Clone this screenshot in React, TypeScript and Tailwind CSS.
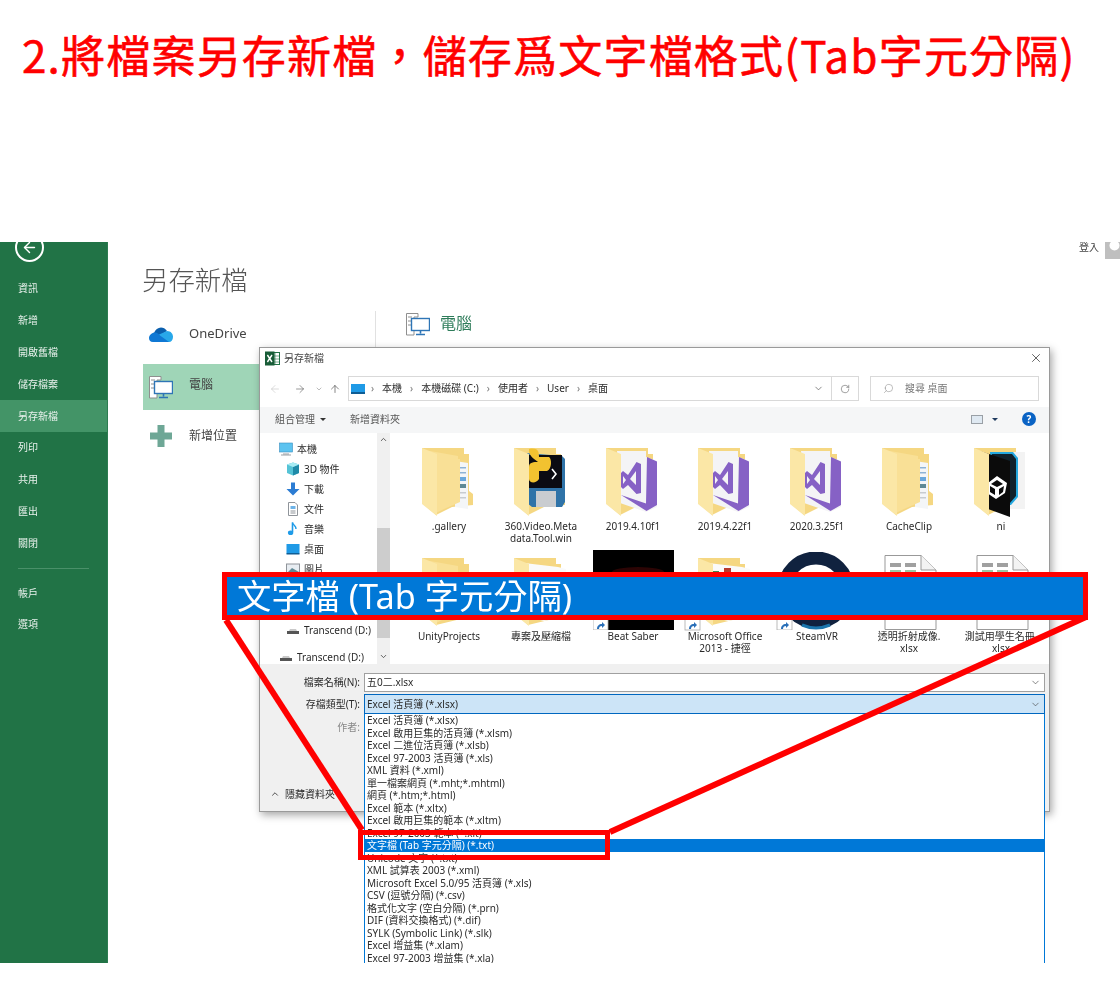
import type { ReactNode } from "react";
import { ArrowLeft, ArrowRight, ArrowUp, ChevronDown, ChevronUp, RotateCw, Search, X } from "lucide-react";

const sidebarTop = ["資訊", "新增", "開啟舊檔", "儲存檔案", "另存新檔", "列印", "共用", "匯出", "關閉"];
const sidebarBottom = ["帳戶", "選項"];

const fileTypes = [
  "Excel 活頁簿 (*.xlsx)",
  "Excel 啟用巨集的活頁簿 (*.xlsm)",
  "Excel 二進位活頁簿 (*.xlsb)",
  "Excel 97-2003 活頁簿 (*.xls)",
  "XML 資料 (*.xml)",
  "單一檔案網頁 (*.mht;*.mhtml)",
  "網頁 (*.htm;*.html)",
  "Excel 範本 (*.xltx)",
  "Excel 啟用巨集的範本 (*.xltm)",
  "Excel 97-2003 範本 (*.xlt)",
  "文字檔 (Tab 字元分隔) (*.txt)",
  "Unicode 文字 (*.txt)",
  "XML 試算表 2003 (*.xml)",
  "Microsoft Excel 5.0/95 活頁簿 (*.xls)",
  "CSV (逗號分隔) (*.csv)",
  "格式化文字 (空白分隔) (*.prn)",
  "DIF (資料交換格式) (*.dif)",
  "SYLK (Symbolic Link) (*.slk)",
  "Excel 增益集 (*.xlam)",
  "Excel 97-2003 增益集 (*.xla)",
];

function Shortcut({ x = 0, y = 0 }: { x?: number; y?: number }) {
  return (
    <g transform={`translate(${x} ${y})`}>
      <rect x="0" y="0" width="15" height="14" fill="#fff" stroke="#aaa" strokeWidth="0.8" />
      <path d="M4 13 C4 10 6 8 9 8 L9 6 L12 9 L9 12 L9 10 C7 10 6 11 6 13 Z" fill="#2a6fb8" />
    </g>
  );
}

function Folder({ contents }: { contents?: ReactNode }) {
  return (
    <svg viewBox="-1 0 56 73" className="w-[56px] h-[73px]">
      <path d="M0 1 H42 V7 H47 V44 L51 47 V58 L30 60 L14 68 L0 56 Z" fill="#f5d782" />
      {contents}
      <path d="M0 1 L15 7 V69 L0 57 Z" fill="#fbe7a6" />
    </svg>
  );
}

function GalleryFolder() {
  return (
    <Folder
      contents={
        <>
          <path d="M33 14 L46 16 V62 L33 60 Z" fill="#f4f6f8" />
          <rect x="35" y="20" width="9" height="1.5" fill="#8fb4d6" />
          <rect x="35" y="25" width="9" height="1.5" fill="#8fb4d6" />
          <rect x="35" y="30" width="9" height="4" fill="#6aa8dc" />
          <rect x="35" y="37" width="9" height="4" fill="#5f8a96" />
          <rect x="35" y="45" width="9" height="1.5" fill="#c8ccd0" />
          <rect x="35" y="50" width="9" height="1.5" fill="#c8ccd0" />
          <path d="M8 4 L36 9 V12 H38 V55 L22 62 L14 66 Z" fill="#f9e096" />
        </>
      }
    />
  );
}

function PythonFolder() {
  return (
    <Folder
      contents={
        <>
          <path d="M13 6 L48 9 L51 12 V55 L48 60 H18 L13 56 Z" fill="#2f73a8" />
          <rect x="15" y="8" width="33" height="33" fill="#0b0b12" />
          <path d="M38 22 L42 27 L38 32" fill="none" stroke="#fff" strokeWidth="1.6" />
          <rect x="22" y="44" width="20" height="16" fill="#c9ccd0" />
          <path d="M15 2 C25 0 25 6 25 10 H35 C38 12 38 22 33 24 H25 V32 C22 37 15 36 15 32 V20 C15 15 20 15 24 15 C20 12 14 8 15 2 Z" fill="#f2c230" />
        </>
      }
    />
  );
}

function VsFolder() {
  return (
    <Folder
      contents={
        <>
          <path d="M11 4 L40 4 V10 L51 14 V60 L40 65 L14 56 Z" fill="#f4f4f6" />
          <path d="M41 10 L51 14.5 V58 L40.5 64 L15 48 L40 56.5 Z" fill="#8661c5" />
          <path fillRule="evenodd" d="M30.5 15 L35 17 V46 L30.5 47 L22 38 L17 42 L15 40 V26 L17 24 L22 28 Z M30 24 L24 32 L30 38 Z M17 29 V37 L20 33 Z" fill="#8661c5" />
        </>
      }
    />
  );
}

function UnityFolder() {
  return (
    <Folder
      contents={
        <>
          <path d="M30 5 H51 V62 H34 Z" fill="#f3f3f3" />
          <path d="M16 5 H39 L44 11 V50 L37 58 H20 Z" fill="#24a9e0" />
          <path d="M18 7 H38 L42 12 V49 L36 56 H20 Z" fill="#10222c" />
          <path d="M6 4 L36 14 V70 L14 62 Z" fill="#0b0b0b" />
          <path fillRule="evenodd" d="M23 29 L33 36 L31 46 L22 52 L13 46 L14 36 Z M23 33 L17 37 L23 40 L29 37 Z M16 39 L16 45 L21 48 L21 42 Z M30 39 L25 42 L25 48 L29 45 Z" fill="#fff" />
        </>
      }
    />
  );
}

function PlainFolder({ kind }: { kind: "plain" | "paper" | "office" }) {
  return (
    <svg viewBox="-1 0 56 73" className="w-[56px] h-[73px] overflow-visible">
      <path d="M0 1 H42 V7 H47 V60 L14 68 L0 56 Z" fill="#f5d782" />
      {kind === "plain" && <path d="M8 4 L36 9 V55 L14 66 Z" fill="#f9e096" />}
      {kind !== "plain" && <path d="M10 6 L44 10 L52 12 V60 L30 64 L14 60 Z" fill="#fafafa" />}
      {kind === "office" && (
        <>
          <rect x="14" y="14" width="7" height="5" fill="#3f8a4f" />
          <rect x="26" y="11" width="7" height="5" fill="#b8392c" />
        </>
      )}
      <path d="M0 1 L15 7 V69 L0 57 Z" fill="#fbe7a6" />
      {kind === "office" && <Shortcut x={-13} y={59} />}
    </svg>
  );
}

function BeatSaber() {
  return (
    <svg viewBox="0 0 81 80" className="w-[81px] h-[80px]">
      <rect width="81" height="80" fill="#000" />
      <ellipse cx="45" cy="22" rx="26" ry="5" fill="#2c0404" />
      <Shortcut x={0} y={66} />
    </svg>
  );
}

function SteamVr() {
  return (
    <svg viewBox="0 0 92 78" className="w-[92px] h-[78px]">
      <circle cx="45" cy="38" r="32" fill="none" stroke="#10223f" strokeWidth="13" />
      <path d="M31 73 Q45 79 59 73" fill="none" stroke="#1b75ac" strokeWidth="3" />
      <Shortcut x={6} y={64} />
    </svg>
  );
}

function SheetDoc() {
  const rows = [8, 15, 22, 29];
  return (
    <svg viewBox="0 0 60 75" className="w-[60px] h-[75px]">
      <path d="M6 0.5 H42 L57 15 V74.5 H6 Z" fill="#fff" stroke="#999" />
      <path d="M42 0.5 V15 H57" fill="#f3f3f3" stroke="#999" />
      {rows.map((y, i) => (
        <g key={y} fill={i % 2 ? "#9bc7a4" : "#a0a0a0"}>
          <rect x="11" y={y} width="11" height="4" />
          <rect x="26" y={y} width="11" height="4" />
          {y > 15 && <rect x="41" y={y} width="11" height="4" />}
        </g>
      ))}
    </svg>
  );
}

function PcIcon({ className }: { className: string }) {
  return (
    <svg viewBox="0 0 24 23" className={className}>
      <path d="M0.5 0.5 H12 V4 H8 V22 H0.5 Z" fill="#fff" stroke="#8f8f8f" />
      <path d="M2 4 H6 M2 8 H5 M2 12 H5" stroke="#8f8f8f" />
      <rect x="5.5" y="5.5" width="18" height="12" fill="#fff" stroke="#2e75b6" strokeWidth="1.4" />
      <path d="M14.5 17.5 V20.5 M10 21.5 H19" stroke="#2e75b6" strokeWidth="1.6" />
    </svg>
  );
}

function TreeIcon({ name }: { name: string }) {
  if (name === "pc")
    return (
      <svg viewBox="0 0 14 14" className="w-[14px] h-[14px] shrink-0">
        <rect x="0.5" y="1" width="13" height="9" fill="#5cc3f0" stroke="#3a8ec0" strokeWidth="0.6" />
        <path d="M4 12 H10 M2 13 H12" stroke="#9a9fa5" />
      </svg>
    );
  if (name === "cube")
    return (
      <svg viewBox="0 0 14 14" className="w-[14px] h-[14px] shrink-0">
        <path d="M7 0.5 L13 2.5 V11 L7 13.5 L1 11 V2.5 Z" fill="#55c3d6" />
        <path d="M7 5 L13 2.5 V11 L7 13.5 Z" fill="#1f8aa8" />
        <path d="M1 2.5 L7 0.5 L13 2.5 L7 5 Z" fill="#a8ecf4" />
      </svg>
    );
  if (name === "down")
    return (
      <svg viewBox="0 0 14 14" className="w-[14px] h-[14px] shrink-0">
        <path d="M5 0.5 H9 V7 H13.5 L7 13.5 L0.5 7 H5 Z" fill="#2b7cd3" />
      </svg>
    );
  if (name === "doc")
    return (
      <svg viewBox="0 0 14 14" className="w-[14px] h-[14px] shrink-0">
        <path d="M2.5 0.5 H9 L11.5 3 V13.5 H2.5 Z" fill="#fff" stroke="#8f949a" />
        <rect x="4.5" y="4" width="5" height="3" fill="#6db3e8" />
        <path d="M4.5 9 H9.5 M4.5 11 H9.5" stroke="#8f949a" />
      </svg>
    );
  if (name === "music")
    return (
      <svg viewBox="0 0 14 14" className="w-[14px] h-[14px] shrink-0">
        <path d="M6.5 0.5 V10" stroke="#1e9be8" strokeWidth="1.6" />
        <ellipse cx="4.6" cy="10.8" rx="2.7" ry="2.3" fill="#1e9be8" />
        <path d="M6.5 0.5 C7 3.5 10 3.5 10 7" fill="none" stroke="#1e9be8" strokeWidth="1.4" />
      </svg>
    );
  if (name === "desktop")
    return (
      <svg viewBox="0 0 14 14" className="w-[14px] h-[14px] shrink-0">
        <rect x="0.5" y="2" width="13" height="9.5" fill="#1f9ae6" />
        <rect x="0.5" y="11" width="13" height="1.5" fill="#0f5d94" />
      </svg>
    );
  if (name === "picture")
    return (
      <svg viewBox="0 0 14 14" className="w-[14px] h-[14px] shrink-0">
        <rect x="0.5" y="2" width="13" height="10" fill="#e8edf2" stroke="#8f949a" />
        <path d="M1 11 L6 6 L13 10 V11.5 H1 Z" fill="#5f8a96" />
      </svg>
    );
  return (
    <svg viewBox="0 0 14 14" className="w-[14px] h-[14px] shrink-0">
      <rect x="1" y="8" width="12" height="3" fill="#555" />
      <path d="M3 8 L4 6 H10 L11 8 Z" fill="#c9c9c9" />
    </svg>
  );
}

const treeRows = [
  { label: "本機", icon: "pc", row: "pl-[19px]" },
  { label: "3D 物件", icon: "cube", row: "pl-[26px]" },
  { label: "下載", icon: "down", row: "pl-[26px]" },
  { label: "文件", icon: "doc", row: "pl-[26px]" },
  { label: "音樂", icon: "music", row: "pl-[26px]" },
  { label: "桌面", icon: "desktop", row: "pl-[26px]" },
  { label: "圖片", icon: "picture", row: "pl-[26px]" },
  { label: "Transcend (D:)", icon: "drive", row: "pl-[26px] mt-[41px]" },
  { label: "Transcend (D:)", icon: "drive", row: "pl-[19px] mt-[7px]" },
];

const files: { label: ReactNode; icon: ReactNode }[] = [
  { label: ".gallery", icon: <GalleryFolder /> },
  { label: <>360.Video.Meta<br />data.Tool.win</>, icon: <PythonFolder /> },
  { label: "2019.4.10f1", icon: <VsFolder /> },
  { label: "2019.4.22f1", icon: <VsFolder /> },
  { label: "2020.3.25f1", icon: <VsFolder /> },
  { label: "CacheClip", icon: <GalleryFolder /> },
  { label: "ni", icon: <UnityFolder /> },
  { label: "UnityProjects", icon: <PlainFolder kind="plain" /> },
  { label: "專案及壓縮檔", icon: <PlainFolder kind="paper" /> },
  { label: "Beat Saber", icon: <BeatSaber /> },
  { label: <>Microsoft Office<br />2013 - 捷徑</>, icon: <PlainFolder kind="office" /> },
  { label: "SteamVR", icon: <SteamVr /> },
  { label: <>透明折射成像.<br />xlsx</>, icon: <SheetDoc /> },
  { label: <>測試用學生名冊.<br />xlsx</>, icon: <SheetDoc /> },
];

function Sidebar() {
  return (
    <aside className="w-[108px] shrink-0 bg-[#217346] text-[#e8f1ec] text-[10px] border-r border-[#2d7d51]">
      <div className="h-[31px] overflow-hidden pl-[15px]">
        <div className="-mt-[9px] w-[29px] h-[29px] rounded-full border-2 border-white flex items-center justify-center">
          <ArrowLeft size={17} strokeWidth={2} className="text-white" />
        </div>
      </div>
      {sidebarTop.map((item) => (
        <div
          key={item}
          className={`h-[31.8px] pl-[18px] flex items-center ${item === "另存新檔" ? "bg-[#439467]" : ""}`}
        >
          {item}
        </div>
      ))}
      <div className="mt-[9px] mb-[8px] mx-[18px] h-px bg-[#4a9069]" />
      {sidebarBottom.map((item) => (
        <div key={item} className="h-[31.8px] pl-[18px] flex items-center">
          {item}
        </div>
      ))}
    </aside>
  );
}

function SaveDialog() {
  return (
    <div className="absolute left-[151px] top-[105px] w-[791px] h-[465px] bg-white border border-[#9a9a9a] shadow-[2px_3px_8px_rgba(0,0,0,0.35)] text-[10px] text-[#2a2a2a]">
      {/* title bar */}
      <div className="h-[24px] pb-[4px] flex items-center pl-[5px] pr-[6px]">
        <svg viewBox="0 0 15 15" className="w-[15px] h-[15px]">
          <rect x="7" y="1.5" width="7.5" height="12" fill="#fff" stroke="#217346" />
          <path d="M10 2 V13 M7 5 H14 M7 8 H14 M7 11 H14" stroke="#217346" strokeWidth="0.6" />
          <rect x="0" y="0.5" width="9.5" height="14" fill="#185c37" />
          <path d="M2.4 4 L7 11 M7 4 L2.4 11" stroke="#fff" strokeWidth="1.4" />
        </svg>
        <span className="ml-[4px] text-[#444]">另存新檔</span>
        <X size={14} strokeWidth={1.2} className="ml-auto text-[#222]" />
      </div>

      {/* nav row */}
      <div className="h-[33px] pt-[4px] flex items-start">
        <div className="w-[88px] h-[25px] flex items-center pl-[9px] shrink-0">
          <ArrowLeft size={12} strokeWidth={1.2} className="text-[#c4c4c4]" />
          <ArrowRight size={12} strokeWidth={1.2} className="ml-[13px] text-[#555]" />
          <ChevronDown size={8} strokeWidth={1.5} className="ml-[9px] text-[#777]" />
          <ArrowUp size={12} strokeWidth={1.4} className="ml-[6px] text-[#555]" />
        </div>
        <div className="w-[511px] h-[25px] border border-[#d9d9d9] flex items-center">
          <div className="w-[14px] h-[10px] ml-[2px] bg-[#1f9ae6] border-b-2 border-[#0f5d94]" />
          <span className="ml-[6px] text-[#777]">›</span>
          <span className="ml-[8px]">本機</span>
          <span className="ml-[8px] text-[#777]">›</span>
          <span className="ml-[8px]">本機磁碟 (C:)</span>
          <span className="ml-[8px] text-[#777]">›</span>
          <span className="ml-[8px]">使用者</span>
          <span className="ml-[8px] text-[#777]">›</span>
          <span className="ml-[8px]">User</span>
          <span className="ml-[8px] text-[#777]">›</span>
          <span className="ml-[8px]">桌面</span>
          <ChevronDown size={11} strokeWidth={1.5} className="ml-auto mr-[7px] text-[#555]" />
          <div className="w-[27px] h-full border-l border-[#d9d9d9] flex items-center justify-center">
            <RotateCw size={10} strokeWidth={1.3} className="text-[#555]" />
          </div>
        </div>
        <div className="ml-[11px] w-[169px] h-[25px] border border-[#d9d9d9] flex items-center pl-[12px] text-[#777]">
          <Search size={11} strokeWidth={1} className="-scale-x-100 text-[#777]" />
          <span className="ml-[11px]">搜尋 桌面</span>
        </div>
      </div>

      {/* toolbar */}
      <div className="mt-[2px] h-[26px] pb-[2px] bg-[#f5f6f7] flex items-center pl-[15px] pr-[13px] text-[#555]">
        <span>組合管理</span>
        <span className="ml-[5px] w-0 h-0 border-x-[3px] border-x-transparent border-t-[3px] border-t-[#333]" />
        <span className="ml-[24px]">新增資料夾</span>
        <div className="ml-auto w-[12px] h-[9px] border border-[#9aa0a6] bg-[#dfe9f2]" />
        <span className="ml-[9px] w-0 h-0 border-x-[3px] border-x-transparent border-t-[3px] border-t-[#1f3a5f]" />
        <div className="ml-[24px] w-[14px] h-[14px] rounded-full bg-[#0a63c4] text-white text-[10px] font-bold flex items-center justify-center">
          ?
        </div>
      </div>

      {/* tree + files */}
      <div className="h-[231px] flex overflow-hidden">
        <div className="w-[117px] shrink-0 pt-[6px]">
          {treeRows.map((t, i) => (
            <div key={i} className={`h-[20px] flex items-center gap-[4px] whitespace-nowrap ${t.row}`}>
              <TreeIcon name={t.icon} />
              <span>{t.label}</span>
            </div>
          ))}
        </div>
        <div className="w-[13px] shrink-0 bg-[#f0f0f0] flex flex-col items-center">
          <ChevronUp size={9} strokeWidth={2.2} className="mt-[2px] text-[#444]" />
          <div className="mt-[84px] w-full h-[110px] bg-[#cdcdcd]" />
          <ChevronDown size={9} strokeWidth={2.2} className="mt-auto mb-[3px] text-[#444]" />
        </div>
        <div className="flex-1 pl-[13px] pt-[14px] grid grid-cols-[repeat(7,92px)] auto-rows-[110px]">
          {files.map((f, i) => (
            <div key={i} className="flex flex-col items-center">
              <div className="h-[73px] w-full flex justify-center items-end">{f.icon}</div>
              <div className="text-center leading-[12px] whitespace-nowrap">{f.label}</div>
            </div>
          ))}
        </div>
      </div>

      {/* form */}
      <div className="h-[147px] bg-[#f0f0f0] pt-[9px]">
        <div className="flex items-center">
          <span className="w-[100px] text-right mr-[4px]">檔案名稱(N):</span>
          <div className="w-[681px] h-[19px] bg-white border border-[#a0a0a0] flex items-center px-[2px]">
            五0二.xlsx
            <ChevronDown size={11} strokeWidth={1.4} className="ml-auto mr-[1px] text-[#444]" />
          </div>
        </div>
        <div className="mt-[2px] flex items-center">
          <span className="w-[100px] text-right mr-[4px]">存檔類型(T):</span>
          <div className="w-[681px] h-[20px] bg-[#cce4f7] border border-[#0067c0] flex items-center px-[2px]">
            Excel 活頁簿 (*.xlsx)
            <ChevronDown size={11} strokeWidth={1.4} className="ml-auto mr-[1px] text-[#444]" />
          </div>
        </div>
        <div className="mt-[6px] h-[14px] w-[100px] text-right text-[#888]">作者:</div>
        <div className="mt-[53px] h-[14px] pl-[10px] flex items-center">
          <ChevronUp size={10} strokeWidth={2} className="text-[#333]" />
          <span className="ml-[5px]">隱藏資料夾</span>
        </div>
      </div>

      {/* open file type list */}
      <div className="absolute left-[104px] top-[366px] w-[681px] bg-white border-x border-[#0078d7] text-[10px] text-[#2a2a2a]">
        {fileTypes.map((t) => (
          <div
            key={t}
            className={`h-[12.53px] leading-[12.53px] pl-[2px] whitespace-nowrap ${
              t.startsWith("文字檔") ? "bg-[#0078d7] text-white" : ""
            }`}
          >
            {t}
          </div>
        ))}
      </div>
    </div>
  );
}

function Backstage() {
  return (
    <main className="relative flex-1 bg-white text-[#444]">
      <div className="flex justify-between h-[69px]">
        <h2 className="pl-[34px] pt-[20px] text-[26.4px] leading-[36px] font-light text-[#555]">另存新檔</h2>
        <div className="flex items-start text-[10px] text-[#444]">
          <span className="leading-[11px]">登入</span>
          <svg viewBox="0 0 15 17" className="ml-[6px] w-[15px] h-[17px]">
            <rect width="15" height="17" fill="#bfbfbf" />
            <circle cx="9.5" cy="3.5" r="5" fill="#fff" />
          </svg>
        </div>
      </div>
      <div className="flex">
        <div className="ml-[35px] w-[232px] shrink-0 text-[13px]">
          <div className="h-[46px] pl-[6px] flex items-center">
            <svg viewBox="0 0 24 16" className="w-[24px] h-[16px]">
              <path d="M5 7 C7 1 14 -1 18 5 L9 11 Z" fill="#0a5fae" />
              <path d="M9 9 L18 5 C22 5 24 8 24 11 C24 14 22 16 20 16 H10 Z" fill="#28a8ea" />
              <path d="M6 6.5 C8 6.5 10 8 11 9.5 L20 16 H4 C1 16 0 14 0 12 C0 9 3 6.5 6 6.5 Z" fill="#0f78d4" />
            </svg>
            <span className="ml-[16px]">OneDrive</span>
          </div>
          <div className="mt-[7px] h-[46px] pl-[6px] bg-[#9fd5b7] flex items-center">
            <PcIcon className="w-[24px] h-[23px]" />
            <span className="ml-[16px] -mt-[5px] text-[12px]">電腦</span>
          </div>
          <div className="mt-[3px] h-[46px] pl-[7px] flex items-center">
            <svg viewBox="0 0 22 22" className="w-[22px] h-[22px]">
              <path d="M7.5 0 H14.5 V7.5 H22 V14.5 H14.5 V22 H7.5 V14.5 H0 V7.5 H7.5 Z" fill="#6ea796" />
            </svg>
            <span className="ml-[17px] text-[12px]">新增位置</span>
          </div>
        </div>
        <div className="h-[100px] border-l border-[#e1e1e1] pl-[30px] flex items-start text-[#2f7d5b]">
          <PcIcon className="w-[24px] h-[23px] mt-[2px]" />
          <span className="ml-[10px] text-[16px] leading-[24px]">電腦</span>
        </div>
      </div>
      <SaveDialog />
    </main>
  );
}

export default function App() {
  return (
    <div className="relative w-[1120px] h-[997px] overflow-hidden bg-white font-['Noto_Sans','Noto_Sans_CJK_TC',sans-serif]">
      <header className="h-[242px] pl-[22px] pt-[22px]">
        <h1 className="text-[44px] leading-[64px] tracking-[1.2px] font-normal text-[#ff0000] [-webkit-text-stroke:0.6px_#ff0000] whitespace-nowrap font-['Noto_Sans_CJK_TC',sans-serif]">
          2.將檔案另存新檔，儲存爲文字檔格式(Tab字元分隔)
        </h1>
      </header>

      <div className="h-[721px] flex overflow-hidden blur-[0.4px]">
        <Sidebar />
        <Backstage />
      </div>

      {/* callout over the screenshot */}
      <svg viewBox="0 0 1120 997" className="absolute inset-0 w-[1120px] h-[997px]">
        <line x1="226" y1="620" x2="362" y2="830" stroke="#ff0000" strokeWidth="6" />
        <line x1="1086" y1="617" x2="610" y2="832" stroke="#ff0000" strokeWidth="6" />
      </svg>
      <div className="absolute left-[222px] top-[572px] w-[866px] h-[48px] border-[5px] border-[#ff0000] bg-[#0078d7] flex items-center pl-[10px]">
        <span className="text-[34.3px] leading-[38px] font-normal text-white whitespace-nowrap blur-[0.6px]">
          文字檔 (Tab 字元分隔)
        </span>
      </div>
      <div className="absolute left-[358px] top-[830px] w-[252px] h-[30px] border-[5px] border-[#ff0000]" />
    </div>
  );
}
